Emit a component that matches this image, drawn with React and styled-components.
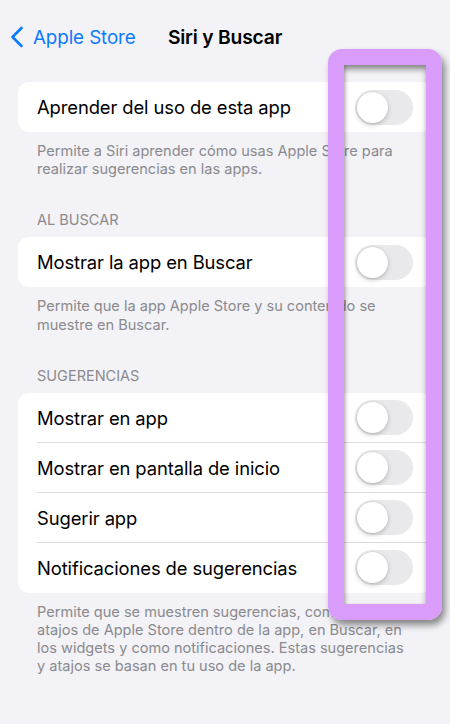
import styled, { createGlobalStyle } from 'styled-components'

const GlobalStyle = createGlobalStyle`
  html, body {
    margin: 0;
    padding: 0;
    background: #f2f2f7;
  }
  body {
    font-family: Inter, "Noto Sans", "Liberation Sans", sans-serif;
    -webkit-font-smoothing: antialiased;
  }
`

const Screen = styled.div`
  position: relative;
  width: 450px;
  height: 724px;
  overflow: hidden;
  background: #f2f2f7;
`

const NavBar = styled.div`
  display: grid;
  grid-template-columns: 1fr auto 1fr;
  align-items: center;
  height: 38px;
  padding: 18px 0 0;
`

const BackButton = styled.div`
  display: flex;
  align-items: center;
  gap: 9px;
  padding-left: 10px;
  color: #0a7aff;
  font-size: 18.8px;
  letter-spacing: -0.1px;
`

const Title = styled.div`
  font-size: 19.3px;
  font-weight: 600;
  color: #000;
  letter-spacing: -0.2px;
`

const Content = styled.div`
  padding: 26px 18px 0;
`

const Section = styled.section`
  margin-bottom: 33px;
`

const SectionHeader = styled.div`
  padding: 0 19px;
  margin-bottom: 8px;
  font-size: 14.5px;
  line-height: 18px;
  color: #8a8a8e;
  text-transform: uppercase;
`

const Card = styled.div`
  background: #fff;
  border-radius: 11px;
  overflow: hidden;
`

const Row = styled.div`
  display: flex;
  align-items: stretch;
  padding-left: 19px;
  height: 50px;
`

const RowInner = styled.div`
  flex: 1;
  display: flex;
  align-items: center;
  justify-content: space-between;
  padding-right: 19px;
  border-top: ${(p) => (p.$first ? 'none' : '1px solid #dcdce0')};
  margin-top: ${(p) => (p.$first ? '0' : '-1px')};
`

const Label = styled.span`
  font-size: 18.4px;
  color: #000;
  letter-spacing: -0.1px;
`

const Track = styled.div`
  position: relative;
  width: 58px;
  height: 35px;
  border-radius: 18px;
  background: #e9e9eb;
  flex-shrink: 0;
`

const Knob = styled.div`
  position: absolute;
  top: 2px;
  left: 2px;
  width: 31px;
  height: 31px;
  border-radius: 50%;
  background: #fff;
  box-shadow: 0 2px 5px rgba(0, 0, 0, 0.2), 0 0 0 0.5px rgba(0, 0, 0, 0.08);
`

const Footer = styled.div`
  padding: 0 19px;
  margin-top: 10px;
  font-size: 14.55px;
  line-height: 18.2px;
  color: #8a8a8e;
`

const Highlight = styled.div`
  position: absolute;
  left: 328px;
  top: 49px;
  width: 82px;
  height: 539px;
  border: 16px solid #d99cfa;
  border-radius: 14px;
  box-shadow: inset 0 5px 6px -1px rgba(0, 0, 0, 0.45), inset 2px 0 4px -2px rgba(0, 0, 0, 0.25),
    3px 5px 7px rgba(0, 0, 0, 0.45);
  pointer-events: none;
`

const Chevron = () => (
  <svg width="14" height="22" viewBox="0 0 14 22" fill="none">
    <path d="M11.5 2 L2.5 11 L11.5 20" stroke="#0a7aff" strokeWidth="2.6" strokeLinecap="round" strokeLinejoin="round" />
  </svg>
)

const Toggle = () => (
  <Track>
    <Knob />
  </Track>
)

const SettingRows = ({ items }) => (
  <Card>
    {items.map((label, i) => (
      <Row key={label}>
        <RowInner $first={i === 0}>
          <Label>{label}</Label>
          <Toggle />
        </RowInner>
      </Row>
    ))}
  </Card>
)

const App = () => {
  return (
    <Screen>
      <GlobalStyle />
      <NavBar>
        <BackButton>
          <Chevron />
          Apple Store
        </BackButton>
        <Title>Siri y Buscar</Title>
        <div />
      </NavBar>
      <Content>
        <Section>
          <SettingRows items={['Aprender del uso de esta app']} />
          <Footer>
            Permite a Siri aprender cómo usas Apple Store para
            <br />
            realizar sugerencias en las apps.
          </Footer>
        </Section>
        <Section>
          <SectionHeader>Al buscar</SectionHeader>
          <SettingRows items={['Mostrar la app en Buscar']} />
          <Footer>
            Permite que la app Apple Store y su contenido se
            <br />
            muestre en Buscar.
          </Footer>
        </Section>
        <Section>
          <SectionHeader>Sugerencias</SectionHeader>
          <SettingRows
            items={[
              'Mostrar en app',
              'Mostrar en pantalla de inicio',
              'Sugerir app',
              'Notificaciones de sugerencias',
            ]}
          />
          <Footer>
            Permite que se muestren sugerencias, como
            <br />
            atajos de Apple Store dentro de la app, en Buscar, en
            <br />
            los widgets y como notificaciones. Estas sugerencias
            <br />
            y atajos se basan en tu uso de la app.
          </Footer>
        </Section>
      </Content>
      <Highlight />
    </Screen>
  )
}

export default App
